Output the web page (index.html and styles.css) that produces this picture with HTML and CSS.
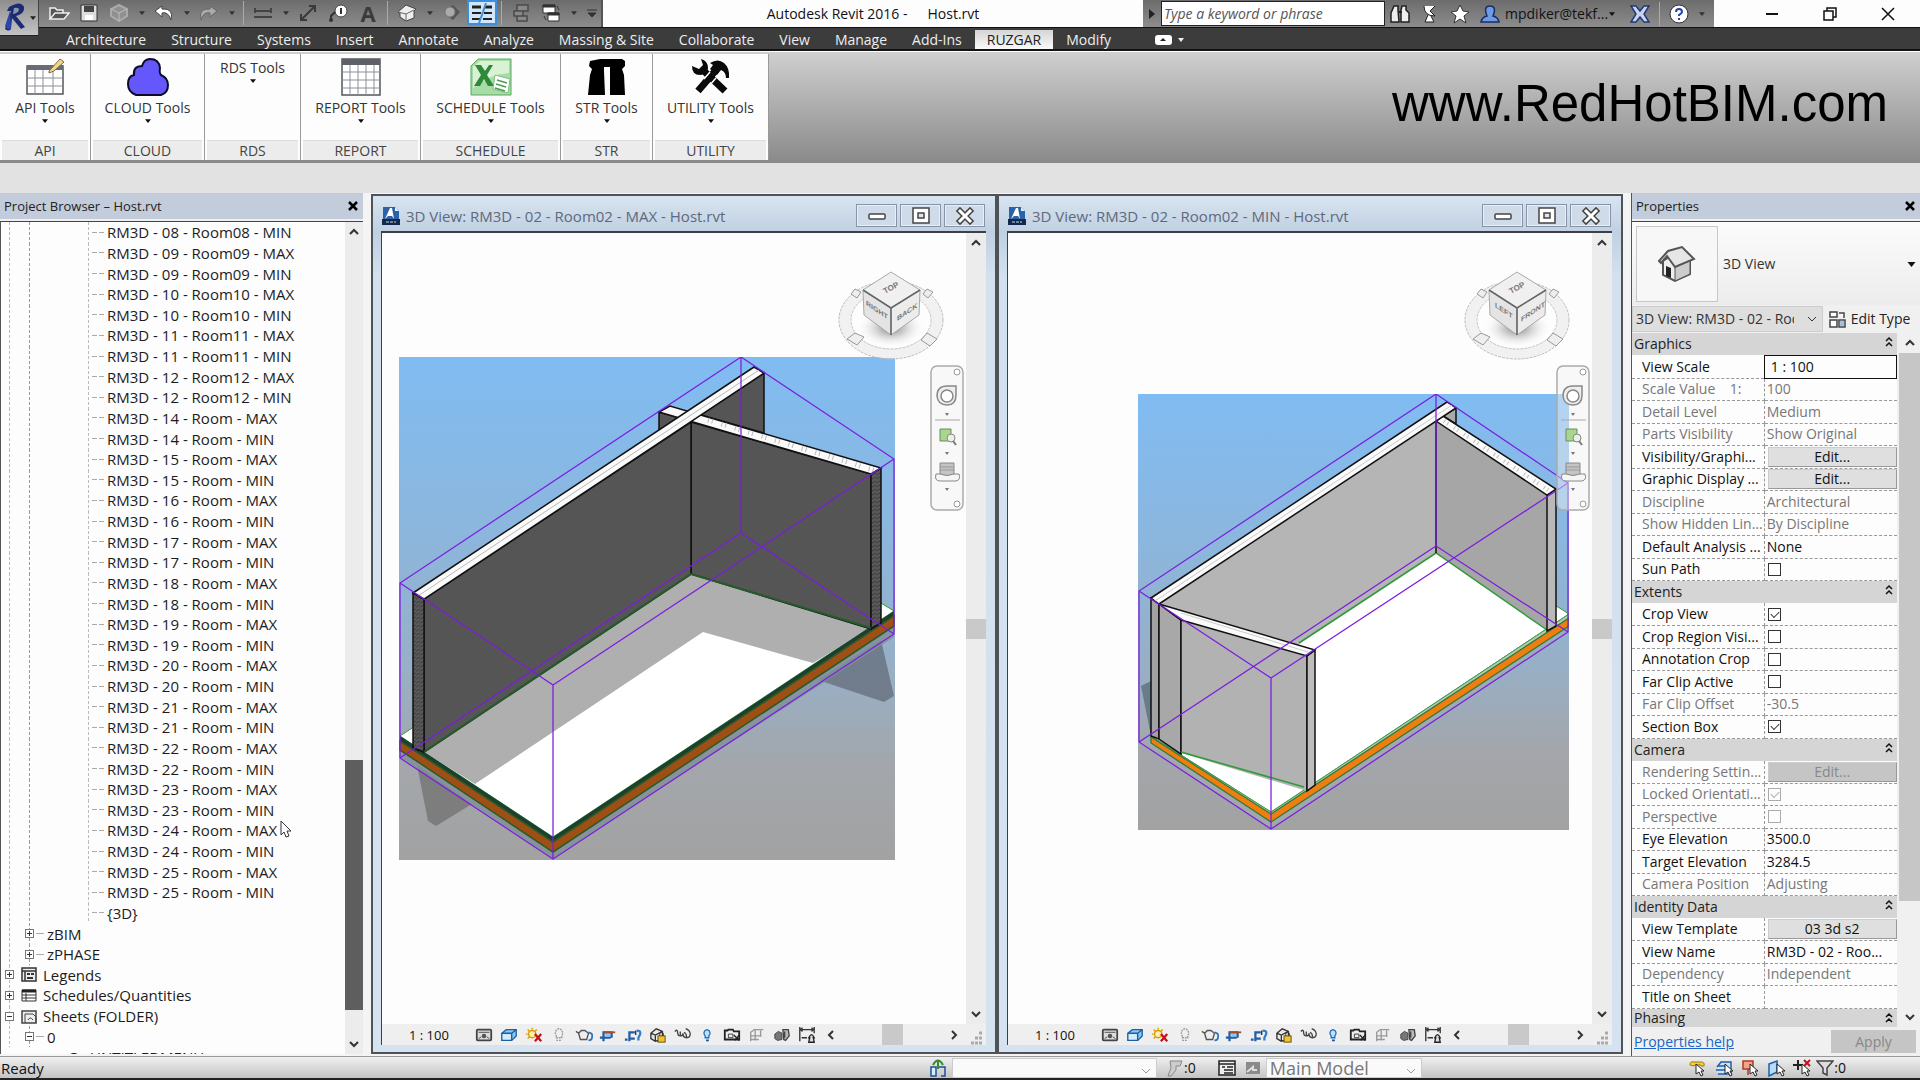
FILE: index.html
```html
<!DOCTYPE html>
<html lang="en">
<head>
<meta charset="utf-8">
<title>Autodesk Revit 2016 - Host.rvt</title>
<link rel="stylesheet" href="styles.css">
</head>
<body>
<svg class="defs" aria-hidden="true">
  <defs>
    <linearGradient id="sky" x1="0" y1="0" x2="0" y2="1">
      <stop offset="0" stop-color="#80bcf2"/><stop offset=".35" stop-color="#8cb6dd"/><stop offset=".62" stop-color="#98afc6"/><stop offset=".82" stop-color="#a3a6ab"/><stop offset="1" stop-color="#a2a2a2"/>
    </linearGradient>
    <pattern id="hatch" width="4" height="4" patternUnits="userSpaceOnUse"><rect width="4" height="4" fill="#595959"/><path d="M0 3L4 1" stroke="#3c3c3c"/></pattern>
    <radialGradient id="shade"><stop offset="0" stop-color="#777"/><stop offset="1" stop-color="#fff" stop-opacity="0"/></radialGradient>
    <symbol id="i-doc" viewBox="0 0 18 20"><path d="M1 1h12l4 4v14H1z" fill="#2b62a8"/><path d="M3 13L8 2l2 0 2 11-2-3H6z" fill="#fff"/><path d="M13 1v4h4z" fill="#e8f0fa"/><path d="M0 13h18v6H0z" fill="#12284d"/><path d="M4 16h10" stroke="#cfd9ea" stroke-dasharray="3 1"/></symbol>
    <symbol id="i-detail" viewBox="0 0 20 16"><rect x="2" y="2" width="16" height="12" rx="1" fill="#ddd" stroke="#444" stroke-width="2"/><path d="M4 5h12" stroke="#444"/><circle cx="10" cy="9" r="2.500" fill="#555"/><path d="M4 12l3-2M16 12l-3-2" stroke="#444"/></symbol>
    <symbol id="i-style" viewBox="0 0 20 16"><path d="M2 6l5-4h11v7l-5 5H2z" fill="#8ec9f2" stroke="#1d5fa6" stroke-width="1.500"/><path d="M2 6h11v8M13 6l5-4" fill="none" stroke="#1d5fa6" stroke-width="1.500"/><path d="M3 7h9v6H3z" fill="#d6ecfb"/></symbol>
    <symbol id="i-sun" viewBox="0 0 20 16"><circle cx="8" cy="7" r="4" fill="#fff3b0" stroke="#d99a00" stroke-width="1.500"/><path d="M8 0v2M1 7h2M3 2l2 2M13 2l-2 2M3 12l2-2" stroke="#d99a00" stroke-width="1.500"/><path d="M11 7l7 8M18 7l-7 8" stroke="#c1121c" stroke-width="2.500"/></symbol>
    <symbol id="i-bulb" viewBox="0 0 20 16"><path d="M10 1a5 5 0 0 0-3 8v2h6V9a5 5 0 0 0-3-8zM7 14h6" fill="none" stroke="#999" stroke-width="1.500" stroke-dasharray="2 1"/></symbol>
    <symbol id="i-teapot" viewBox="0 0 20 16"><path d="M1 4l3 2 2 7h7l2-7-4-3H7L4 6" fill="#eee" stroke="#555" stroke-width="1.500"/><path d="M15 5q5 1 4 5 0 4-4 4" fill="none" stroke="#2a72c4" stroke-width="2"/></symbol>
    <symbol id="i-crop" viewBox="0 0 20 16"><path d="M1 11h12M5 15V5h10M14 5v6" fill="none" stroke="#1f5fa8" stroke-width="2.500"/><path d="M5 5h13" stroke="#a05030" stroke-width="2"/><path d="M7 7h5v3H7z" fill="#8cc0ee"/></symbol>
    <symbol id="i-cropreg" viewBox="0 0 20 16"><path d="M1 13h3M6 15V5h6M12 12H5" fill="none" stroke="#1f5fa8" stroke-width="2.500"/><path d="M13 3v5" stroke="#333" stroke-width="1.500"/><path d="M14 3q5 0 4 4l-2 4v3" fill="none" stroke="#2f7fd0" stroke-width="2.500"/></symbol>
    <symbol id="i-lock3d" viewBox="0 0 20 18"><path d="M2 7l6-5 7 3v9l-8 2-5-3zM2 7l5 2 8-4M7 9v7" fill="#e8e8e8" stroke="#333" stroke-width="1.500"/><rect x="10" y="10" width="8" height="7" fill="#f1c232" stroke="#5b4500"/><path d="M12 10V7q2-2 4 0v3" fill="none" stroke="#333"/></symbol>
    <symbol id="i-glasses" viewBox="0 0 20 16"><path d="M1 4q3-3 3 1 0 4 3 4t3-3q0 5 4 5t4-4-5-6M7 9V4M14 11q0-5-3-6" fill="none" stroke="#444" stroke-width="1.500"/></symbol>
    <symbol id="i-reveal" viewBox="0 0 20 16"><path d="M10 2a4 4 0 0 0-2 7v2h4V9a4 4 0 0 0-2-7z" fill="#bfe1fb" stroke="#1d6fc0" stroke-width="1.500"/><path d="M9 14h3" stroke="#1d4d90" stroke-width="2"/></symbol>
    <symbol id="i-temp" viewBox="0 0 20 16"><path d="M2 3h3l1-1h5l1 2h6v9H2z" fill="#eee" stroke="#222" stroke-width="2"/><path d="M6 7h5v4H6z" fill="none" stroke="#333"/><path d="M12 8l6 6M18 8l-5 6" stroke="#222" stroke-width="1.500"/></symbol>
    <symbol id="i-analytic" viewBox="0 0 20 16"><path d="M3 15V5l4-3h10M3 9h12M3 13h9M8 3v11M14 3v7" fill="none" stroke="#999" stroke-width="1.500"/></symbol>
    <symbol id="i-displace" viewBox="0 0 20 16"><path d="M2 7l4-3 4 2v7l-5 1-3-2z" fill="#777" stroke="#444"/><path d="M11 2l6 0 1 7-4 5-2-1zM13 4v7" fill="#bbb" stroke="#444" stroke-width="1.500"/></symbol>
    <symbol id="i-constraint" viewBox="0 0 20 20"><path d="M2 1v16M18 1v7M3 4h14M5 2L3 4l2 2M15 2l2 2-2 2M4 13h6" fill="none" stroke="#333" stroke-width="1.500"/><path d="M12 18l1-5h-1q3-7 6 0h-1l1 5z" fill="#ddd" stroke="#222" stroke-width="1.500"/></symbol>
    <symbol id="i-cube" viewBox="0 0 110 96">
      <ellipse cx="54" cy="52" rx="46" ry="33" fill="none" stroke="#f1f1f1" stroke-width="11"/>
      <ellipse cx="54" cy="52" rx="52" ry="39" fill="none" stroke="#bbb" stroke-dasharray="3 1"/><ellipse cx="54" cy="52" rx="40" ry="29" fill="#fdfdfd" stroke="#c4c4c4" stroke-dasharray="3 1"/>
      <ellipse cx="54" cy="60" rx="34" ry="20" fill="url(#shade)"/>
      <path d="M14 26l4-5 6 3-4 6zM86 26l4-5 6 3-5 6zM10 71l8-6 9 4-7 8zM84 72l6-7 10 6-7 7z" fill="#eee" stroke="#999"/>
      <path d="M54 4L83 22 54 40 26 22z" fill="#f0f0f0" stroke="#aaa"/><path d="M26 22L54 40V67L27 47z" fill="#e4e4e4" stroke="#aaa"/><path d="M83 22L54 40V67L82 47z" fill="#ececec" stroke="#aaa"/><path d="M26 22L54 40 83 22M54 40V67" fill="none" stroke="#666" stroke-width="1.500"/>
    </symbol>
    <symbol id="i-nav" viewBox="0 0 34 146">
      <rect x="1" y="1" width="32" height="144" rx="6" fill="#f2f2f2" fill-opacity=".45" stroke="#aaa" stroke-width="1.500"/>
      <circle cx="27" cy="7" r="3" fill="#fff" stroke="#999"/><circle cx="27" cy="139" r="3" fill="#fff" stroke="#999"/>
      <path d="M17 21h9v9q0 10-9 10T7 31q0-10 10-10z" fill="#eee" stroke="#888" stroke-width="1.500"/><circle cx="17" cy="31" r="6" fill="#fff" stroke="#888" stroke-width="1.500"/>
      <path d="M5 55h25" stroke="#aaa"/>
      <path d="M10 64h11v12H10z" fill="#a9d68f" stroke="#6b8b60"/><circle cx="21" cy="73" r="4" fill="#e9f1e6" stroke="#888"/><path d="M23 76l3 4" stroke="#777" stroke-width="2"/>
      <path d="M10 98h14v13H10z" fill="#c4c4c4" stroke="#888"/><path d="M10 102h14M10 105h14" stroke="#999"/><path d="M6 109q-2 7 4 7h16q5-1 3-7H24q-7 3-14 0z" fill="#f5f5f5" stroke="#888"/>
      <path d="M15 48h4l-2 3zM15 87h4l-2 3zM15 123h4l-2 3z" fill="#777"/>
    </symbol>
    <symbol id="i-chev" viewBox="0 0 10 10"><path d="M1 7l4-4 4 4" fill="none" stroke="currentColor" stroke-width="2"/></symbol>
    <symbol id="i-thinchev" viewBox="0 0 10 10"><path d="M1 7l4-4 4 4" fill="none" stroke="currentColor"/></symbol>
    <symbol id="i-dbl" viewBox="0 0 10 12"><path d="M2 5l3-3 3 3M2 10l3-3 3 3" fill="none" stroke="#111" stroke-width="1.500"/></symbol>
    <symbol id="i-arr" viewBox="0 0 8 5"><path d="M0 0h8L4 5z" fill="currentColor"/></symbol>
    <symbol id="i-cursor" viewBox="0 0 12 18"><path d="M1 1v14l3-3 2 5 3-1-2-5h4z" fill="#fff" stroke="#333"/></symbol>
    <symbol id="i-select" viewBox="0 0 10 14"><path d="M1 1v10l3-2 2 4 2-1-2-4h3z" fill="#fff" stroke="#222"/></symbol>
  </defs>
</svg>

<div class="app">
  <header class="titlebar">
    <button class="appmenu" aria-label="Application menu">
      <svg width="26" height="32" viewBox="0 0 26 32"><path d="M7 5q12-7 15 0 1 7-8 9l9 11-4 2-9-11-1 11q-2 3-6 0L9 9 5 9z" fill="#1c2c74"/><path d="M12 6q5-1 5 2-1 3-6 4z" fill="#8d93a8"/><path d="M3 24L8 9l1 17q-2 4-6-2z" fill="#2c45a8"/></svg>
      <svg width="6" height="4"><use href="#i-arr"/></svg>
    </button>
    <nav class="qat" aria-label="Quick access">
      <button aria-label="Open"><svg width="22" height="16"><path d="M2 14V3h5l2 2h6v3M2 14L7 8h14l-5 6z" fill="#555" stroke="#eee" stroke-width="1.500"/></svg></button>
      <button aria-label="Save"><svg width="18" height="18"><path d="M1 1h16v16H1z" fill="#ddd" stroke="#333"/><path d="M4 2h10v6H4z" fill="#444"/><path d="M5 11h8v5H5z" fill="#fff"/></svg></button>
      <button aria-label="Synchronize"><svg width="20" height="18"><path d="M10 1l8 4v7l-8 5-8-5V5z" fill="#909090" stroke="#aaa" stroke-width="2"/><path d="M2 5l8 4 8-4M10 9v8" stroke="#bbb" fill="none"/></svg></button>
      <button class="drop" aria-label="More"><svg width="6" height="4"><use href="#i-arr"/></svg></button>
      <button aria-label="Undo"><svg width="22" height="18"><path d="M9 2L2 7l7 6V9q6-2 9 7 3-12-9-11z" fill="#fff" stroke="#444"/></svg></button>
      <button class="drop" aria-label="Undo list"><svg width="6" height="4"><use href="#i-arr"/></svg></button>
      <button aria-label="Redo"><svg width="22" height="18"><path d="M12 2l7 5-7 6V9Q6 7 3 16 0 4 12 5z" fill="#aaa" stroke="#666"/></svg></button>
      <button class="drop" aria-label="Redo list"><svg width="6" height="4"><use href="#i-arr"/></svg></button>
      <i class="sep"></i>
      <button aria-label="Measure"><svg width="18" height="16"><path d="M1 3v5M17 3v5M1 6h16M0 12h18" stroke="#444" stroke-width="2"/></svg></button>
      <button class="drop" aria-label="Measure list"><svg width="6" height="4"><use href="#i-arr"/></svg></button>
      <button aria-label="Aligned dimension"><svg width="20" height="20"><path d="M4 16L16 4M11 3l6 0v6M9 17l-6 0v-6" stroke="#3a3a3a" stroke-width="2" fill="none"/></svg></button>
      <button aria-label="Tag"><svg width="22" height="20"><circle cx="14" cy="8" r="6" fill="#fff" stroke="#444"/><path d="M14 5v6M8 9L4 13v5" stroke="#333" stroke-width="2" fill="none"/><circle cx="4" cy="17" r="2" fill="#333"/></svg></button>
      <button class="text-tool" aria-label="Text">A</button>
      <i class="sep"></i>
      <button aria-label="3D view"><svg width="20" height="18"><path d="M1 8l8-7 10 4-2 2v7l-8 3-6-4V9z" fill="#eee" stroke="#444"/><path d="M1 8l8 2 8-4M9 10v7" stroke="#666" fill="none"/></svg></button>
      <button class="drop" aria-label="3D view list"><svg width="6" height="4"><use href="#i-arr"/></svg></button>
      <button aria-label="Section"><svg width="18" height="16"><path d="M7 2l3-2 7 7-7 8-3-2z" fill="#555"/><circle cx="7" cy="7" r="5" fill="#aaa" stroke="#777"/></svg></button>
      <button class="on" aria-label="Thin lines"><svg width="24" height="20"><path d="M2 4h9M15 4h7" stroke="#222" stroke-width="3"/><path d="M2 10h9M14 10h8M2 16h8M13 16h9" stroke="#222" stroke-width="2"/><path d="M16 0l-3 9-4 11" stroke="#4a8ed0" stroke-width="2" fill="none"/></svg></button>
      <i class="sep"></i>
      <button aria-label="Close hidden windows"><svg width="18" height="20"><path d="M5 2h11v6H5zM2 8h9v5H2zM5 13h10v5H5z" fill="#888" stroke="#4a4a4a" stroke-width="1.500"/></svg></button>
      <button aria-label="Switch windows"><svg width="20" height="20"><path d="M2 2h12v8H2z" fill="#fff" stroke="#333"/><path d="M7 10h11v8H7z" fill="#fff" stroke="#333"/><path d="M2 2h12v2H2zM7 10h11v2H7zM16 3l2 4M3 13l2 4" fill="#333" stroke="#333"/></svg></button>
      <button class="drop" aria-label="Window list"><svg width="6" height="4"><use href="#i-arr"/></svg></button>
      <button class="drop custom" aria-label="Customize"><svg width="12" height="10"><path d="M1 2h10M2 5h8L6 9z" fill="#333" stroke="#333"/></svg></button>
    </nav>
    <h1 class="apptitle"><span>Autodesk Revit 2016 -</span><span>Host.rvt</span></h1>
    <div class="infocenter">
      <button class="toggle" aria-label="Collapse search"><svg width="6" height="10"><path d="M0 0l6 5-6 5z" fill="#222"/></svg></button>
      <input type="search" aria-label="Search help" placeholder="Type a keyword or phrase">
      <button aria-label="Search"><svg width="20" height="20"><path d="M4 2h4v4l1 12H1V9zM12 2h4v4l3 3v9h-8V6z" fill="#eee" stroke="#222" stroke-width="1.500"/><path d="M8 8h4" stroke="#222" stroke-width="2"/></svg></button>
      <button aria-label="Communication center"><svg width="18" height="20"><path d="M3 2q0 10 11 10L9 7l5-5M7 11l-3 7h9l-3-6" fill="#fff" stroke="#222"/></svg></button>
      <button aria-label="Favorites"><svg width="20" height="20"><path d="M10 1l3 6 6 1-5 4 2 7-6-4-6 4 2-7-5-4 6-1z" fill="#fff" stroke="#333"/></svg></button>
      <button aria-label="Account"><svg width="20" height="20"><path d="M1 18q1-5 6-6Q3 2 10 2t3 10q5 1 6 6z" fill="#6d9be6" stroke="#1c2d66" stroke-width="1.500"/></svg></button>
      <button class="user">mpdiker@tekf...<svg width="6" height="4"><use href="#i-arr"/></svg></button>
      <button aria-label="Exchange apps"><svg width="20" height="18"><path d="M1 1h5l4 5 4-5h5l-5 8 5 8h-5l-4-5-4 5H1l5-8z" fill="#c9d5ee" stroke="#1f3a7a" stroke-width="1.500"/></svg></button>
      <i class="sep"></i>
      <button aria-label="Help"><svg width="20" height="20"><circle cx="10" cy="10" r="9" fill="#fff" stroke="#333"/><path d="M7 8q0-3 3-3t3 3q0 1-3 3v1M10 14v2" fill="none" stroke="#2444a8" stroke-width="2"/></svg></button>
      <button class="drop" aria-label="Help list"><svg width="6" height="4"><use href="#i-arr"/></svg></button>
    </div>
    <div class="winctl">
      <button aria-label="Minimize"><svg width="14" height="14"><path d="M1 7h12" stroke="#111" stroke-width="2"/></svg></button>
      <button aria-label="Restore"><svg width="14" height="14"><path d="M1 4h9v9H1zM4 4V1h9v9h-3" fill="none" stroke="#111" stroke-width="1.500"/></svg></button>
      <button aria-label="Close"><svg width="14" height="14"><path d="M1 1l12 12M13 1L1 13" stroke="#111" stroke-width="1.500"/></svg></button>
    </div>
  </header>

  <nav class="tabs">
    <button>Architecture</button><button>Structure</button><button>Systems</button><button>Insert</button><button>Annotate</button><button>Analyze</button><button>Massing &amp; Site</button><button>Collaborate</button><button>View</button><button>Manage</button><button>Add-Ins</button><button class="active">RUZGAR</button><button>Modify</button>
    <button class="tabstate" aria-label="Minimize ribbon"><svg width="34" height="12"><rect x="1" y="1" width="17" height="10" rx="3" fill="#fff"/><path d="M6 7h6L9 4z" fill="#222"/><path d="M24 4h6l-3 4z" fill="#eee"/></svg></button>
  </nav>

  <section class="ribbon">
    <div class="group g-api"><button><svg width="40" height="38"><path d="M2 8h36v28H2z" fill="#fff" stroke="#555" stroke-width="1.500"/><path d="M2 7h36v5H2z" fill="#666b75"/><path d="M2 20h36M2 28h36M10 12v24M18 12v24M28 12v24" stroke="#8a8f99" fill="none"/><path d="M24 13L35 1l4 3-10 9-5 2z" fill="#f0d58a" stroke="#7d6a3a"/></svg>API Tools<svg class="arr"><use href="#i-arr"/></svg></button><h2>API</h2></div>
    <div class="group g-cloud"><button><svg width="42" height="38"><path d="M9 37Q1 34 1 26q0-8 6-9-1-9 8-9 2-7 8-7 9 0 10 9-1 5 1 7 7 3 7 10 0 8-7 10z" fill="#6457fb" stroke="#0c0c2a" stroke-width="2"/></svg>CLOUD Tools<svg class="arr"><use href="#i-arr"/></svg></button><h2>CLOUD</h2></div>
    <div class="group g-rds"><button>RDS Tools<svg class="arr"><use href="#i-arr"/></svg></button><h2>RDS</h2></div>
    <div class="group g-report"><button><svg width="40" height="38"><path d="M1 1h38v36H1z" fill="#fff" stroke="#555" stroke-width="1.500"/><path d="M1 1h38v6H1z" fill="#5d6069"/><path d="M1 14h38M1 22h38M1 30h38M9 7v30M17 7v30M25 7v30M33 7v30" stroke="#8a8f99"/></svg>REPORT Tools<svg class="arr"><use href="#i-arr"/></svg></button><h2>REPORT</h2></div>
    <div class="group g-schedule"><button><svg width="42" height="38"><path d="M8 1h33v36H1V8z" fill="#a8dca6" stroke="#58a860"/><path d="M10 3h29v12Q20 16 3 30V9z" fill="#d9f2d4"/><path d="M5 7h6l4 6 4-6h4l-6 10 7 11h-6l-4-7-4 7H4l7-11z" fill="#2c8a3a"/><path d="M25 17l15 4-2 14-15-4z" fill="#fff" stroke="#7fbf80"/><path d="M27 22l10 3M26 26l10 3M25 30l10 3" stroke="#4f9a55" stroke-width="1.500"/></svg>SCHEDULE Tools<svg class="arr"><use href="#i-arr"/></svg></button><h2>SCHEDULE</h2></div>
    <div class="group g-str"><button><svg width="40" height="38"><path d="M3 3l10-2 22 0 3 2v5l-3 3 2 6 1 20H23V9h-6v4l1 24H1l2-20 2-6-3-3z" fill="#000"/></svg>STR Tools<svg class="arr"><use href="#i-arr"/></svg></button><h2>STR</h2></div>
    <div class="group g-utility"><button><svg width="42" height="38"><path d="M8 33L26 12M15 14L35 33" stroke="#0a0a0a" stroke-width="7"/><path d="M20 5q8-5 14 0 6 5 5 15l-3 0q0-6-5-8l-4 5-7-6 3-4z" fill="#0a0a0a"/><path d="M2 8q0 9 8 9 8 0 8-7 0-7-7-9l2 6-4 4z" fill="#0a0a0a"/><path d="M19 28l7-8M14 21l6-7" stroke="#fff" stroke-width="1.500"/></svg>UTILITY Tools<svg class="arr"><use href="#i-arr"/></svg></button><h2>UTILITY</h2></div>
    <p class="brand">www.RedHotBIM.com</p>
  </section>

  <main class="workspace">
    <aside class="panel browser">
      <header><h2>Project Browser – Host.rvt</h2><button aria-label="Close"><svg width="12" height="12"><path d="M2 2l8 8M10 2l-8 8" stroke="#000" stroke-width="2.500"/></svg></button></header>
      <div class="panel-body">
        <ul class="tree">
          <li class="leaf">RM3D - 08 - Room08 - MIN</li>
          <li class="leaf">RM3D - 09 - Room09 - MAX</li>
          <li class="leaf">RM3D - 09 - Room09 - MIN</li>
          <li class="leaf">RM3D - 10 - Room10 - MAX</li>
          <li class="leaf">RM3D - 10 - Room10 - MIN</li>
          <li class="leaf">RM3D - 11 - Room11 - MAX</li>
          <li class="leaf">RM3D - 11 - Room11 - MIN</li>
          <li class="leaf">RM3D - 12 - Room12 - MAX</li>
          <li class="leaf">RM3D - 12 - Room12 - MIN</li>
          <li class="leaf">RM3D - 14 - Room - MAX</li>
          <li class="leaf">RM3D - 14 - Room - MIN</li>
          <li class="leaf">RM3D - 15 - Room - MAX</li>
          <li class="leaf">RM3D - 15 - Room - MIN</li>
          <li class="leaf">RM3D - 16 - Room - MAX</li>
          <li class="leaf">RM3D - 16 - Room - MIN</li>
          <li class="leaf">RM3D - 17 - Room - MAX</li>
          <li class="leaf">RM3D - 17 - Room - MIN</li>
          <li class="leaf">RM3D - 18 - Room - MAX</li>
          <li class="leaf">RM3D - 18 - Room - MIN</li>
          <li class="leaf">RM3D - 19 - Room - MAX</li>
          <li class="leaf">RM3D - 19 - Room - MIN</li>
          <li class="leaf">RM3D - 20 - Room - MAX</li>
          <li class="leaf">RM3D - 20 - Room - MIN</li>
          <li class="leaf">RM3D - 21 - Room - MAX</li>
          <li class="leaf">RM3D - 21 - Room - MIN</li>
          <li class="leaf">RM3D - 22 - Room - MAX</li>
          <li class="leaf">RM3D - 22 - Room - MIN</li>
          <li class="leaf">RM3D - 23 - Room - MAX</li>
          <li class="leaf">RM3D - 23 - Room - MIN</li>
          <li class="leaf">RM3D - 24 - Room - MAX<svg class="cursor" width="12" height="18"><use href="#i-cursor"/></svg></li>
          <li class="leaf">RM3D - 24 - Room - MIN</li>
          <li class="leaf">RM3D - 25 - Room - MAX</li>
          <li class="leaf">RM3D - 25 - Room - MIN</li>
          <li class="leaf">{3D}</li>
          <li class="sub"><button class="exp plus" aria-label="Expand zBIM"></button>zBIM</li>
          <li class="sub"><button class="exp plus" aria-label="Expand zPHASE"></button>zPHASE</li>
          <li class="top"><button class="exp plus" aria-label="Expand Legends"></button><svg width="16" height="15"><path d="M1 1h14v13H1zM1 4h14M4 4v10" fill="#eee" stroke="#333" stroke-width="1.500"/><path d="M6 7h3M10 7h3M6 11h6" stroke="#333" stroke-width="2"/></svg>Legends</li>
          <li class="top"><button class="exp plus" aria-label="Expand Schedules/Quantities"></button><svg width="16" height="13"><path d="M1 1h14v11H1zM1 6h14M1 9h14M5 4v8" fill="#fff" stroke="#333"/><path d="M1 2h14" stroke="#222" stroke-width="3"/></svg>Schedules/Quantities</li>
          <li class="top"><button class="exp" aria-label="Collapse Sheets"></button><svg width="16" height="15"><path d="M1 2h14v12H1z" fill="#eee" stroke="#444" stroke-width="1.500"/><path d="M4 5h8l3 3v6M4 5v9M7 11q2-4 5 0" fill="none" stroke="#444"/></svg>Sheets (FOLDER)</li>
          <li class="sub"><button class="exp" aria-label="Collapse 0"></button>0</li>
          <li class="cut">C - UNTITLEDMENU</li>
        </ul>
        <div class="vscroll dark"><button aria-label="Scroll up"><svg width="10" height="10"><use href="#i-chev"/></svg></button><i class="thumb"></i><button class="down" aria-label="Scroll down"><svg width="10" height="10"><use href="#i-chev"/></svg></button></div>
      </div>
    </aside>

    <div class="mdi">
      <section class="view">
        <header><svg width="18" height="20"><use href="#i-doc"/></svg><h2>3D View: RM3D - 02 - Room02 - MAX - Host.rvt</h2>
          <button aria-label="Minimize"><svg width="20" height="18"><rect x="2" y="7" width="16" height="5" rx="1" fill="#fff" stroke="#444" stroke-width="1.500"/></svg></button>
          <button aria-label="Maximize"><svg width="20" height="18"><path d="M2 1h16v15H2z" fill="#fff" stroke="#444" stroke-width="1.500"/><path d="M7 6h6v5H7z" fill="#dde6f0" stroke="#444" stroke-width="1.500"/></svg></button>
          <button aria-label="Close"><svg width="20" height="18"><path d="M5 4l10 10M15 4L5 14" stroke="#444" stroke-width="6" stroke-linecap="square"/><path d="M5 4l10 10M15 4L5 14" stroke="#fff" stroke-width="3" stroke-linecap="square"/></svg></button>
        </header>
        <div class="client">
          <div class="canvas">
            <svg class="scene max" viewBox="399 357 496 503" role="img" aria-label="Section box of Room02, maximum height">
              <rect x="399" y="357" width="496" height="503" fill="url(#sky)"/>
              <path d="M417 765L428 821 436 826 472 804z" fill="#777" opacity=".85"/><path d="M818 680L884 702 894 696 881 640z" fill="#66707e" opacity=".8"/>
              <path d="M400 750L553 852 894 626V637L553 858 400 757z" fill="#7f8f96" opacity=".8"/>
              <path d="M400 736L691 545 881 603 894 611 553 837z" fill="#fff" stroke="#2d9a3a"/>
              <path d="M424 752L691 574 871 628 813 663 703 632 475 784z" fill="#afafaf"/>
              <path d="M400 736L553 837 894 611V618L553 844 400 743z" fill="#1d3f2c"/>
              <path d="M400 741L553 842 894 616V626L553 852 400 750z" fill="#a04f14" stroke="#2b5a2d" stroke-width="1.500"/>
              <g stroke="#111" stroke-width="1.500">
                <path d="M659 412L680 418 659 432z" fill="#555"/>
                <path d="M701 415L764 373V433z" fill="#555"/>
                <path d="M691 422L871 474V629L691 574z" fill="#555"/>
                <path d="M424 599L691 422V574L424 752z" fill="#555"/>
                <path d="M871 474L881 468V623L871 629z" fill="url(#hatch)"/>
                <path d="M413 593L424 599V752L413 748z" fill="url(#hatch)"/>
                <path d="M659 412L670 406 881 468 871 474z" fill="#fafafa"/>
                <path d="M413 593L754 367 764 373 424 599z" fill="#fafafa"/>
              </g>
              <path d="M418 596L759 370" stroke="#bbb"/><path d="M708 420L874 470" stroke="#bbb" stroke-width="5" stroke-dasharray="1 3 1 9"/>
              <path d="M424 752L691 574 871 628" fill="none" stroke="#235c2a" stroke-width="2"/>
              <path d="M741 357L894 459V634L553 859 400 758V583zM400 583L553 685 894 459M553 685V859M741 357V533L894 634M741 533L400 758" fill="none" stroke="#7a1ee0" stroke-width="1.250"/>
            </svg>
            <svg class="cube" width="110" height="96"><use href="#i-cube"/><g fill="#777" font-family="Liberation Sans" font-size="8" font-weight="bold"><text transform="translate(48 26) rotate(-28)">TOP</text><text transform="translate(29 37) skewY(34)" font-size="7">RIGHT</text><text transform="translate(60 53) skewY(-34)" font-size="7">BACK</text></g></svg>
            <svg class="navbar" width="34" height="146"><use href="#i-nav"/></svg>
          </div>
          <div class="vscroll"><button aria-label="Scroll up"><svg width="10" height="10"><use href="#i-chev"/></svg></button><i class="thumb"></i><button class="down" aria-label="Scroll down"><svg width="10" height="10"><use href="#i-chev"/></svg></button></div>
          <div class="viewbar"><button class="scale">1 : 100</button>
            <div class="viewtools">
              <button aria-label="Detail level"><svg><use href="#i-detail"/></svg></button><button aria-label="Visual style"><svg><use href="#i-style"/></svg></button><button aria-label="Sun path off"><svg><use href="#i-sun"/></svg></button><button aria-label="Shadows off"><svg><use href="#i-bulb"/></svg></button><button aria-label="Rendering"><svg><use href="#i-teapot"/></svg></button><button aria-label="Crop view"><svg><use href="#i-crop"/></svg></button><button aria-label="Crop region"><svg><use href="#i-cropreg"/></svg></button><button aria-label="Lock 3D view"><svg><use href="#i-lock3d"/></svg></button><button aria-label="Temporary hide"><svg><use href="#i-glasses"/></svg></button><button aria-label="Reveal hidden"><svg><use href="#i-reveal"/></svg></button><button aria-label="Temporary properties"><svg><use href="#i-temp"/></svg></button><button aria-label="Analytical model"><svg><use href="#i-analytic"/></svg></button><button aria-label="Displacement sets"><svg><use href="#i-displace"/></svg></button><button aria-label="Reveal constraints"><svg><use href="#i-constraint"/></svg></button>
            </div>
            <div class="hscroll"><button class="left" aria-label="Scroll left"><svg width="10" height="10"><use href="#i-chev"/></svg></button><i class="thumb"></i><button class="right" aria-label="Scroll right"><svg width="10" height="10"><use href="#i-chev"/></svg></button></div>
          </div>
          <svg class="grip" width="14" height="14"><path d="M9 2h3M5 7h3M9 7h3M1 12h3M5 12h3M9 12h3" stroke="#aaa" stroke-width="3"/></svg>
        </div>
      </section>

      <section class="view">
        <header><svg width="18" height="20"><use href="#i-doc"/></svg><h2>3D View: RM3D - 02 - Room02 - MIN - Host.rvt</h2>
          <button aria-label="Minimize"><svg width="20" height="18"><rect x="2" y="7" width="16" height="5" rx="1" fill="#fff" stroke="#444" stroke-width="1.500"/></svg></button>
          <button aria-label="Maximize"><svg width="20" height="18"><path d="M2 1h16v15H2z" fill="#fff" stroke="#444" stroke-width="1.500"/><path d="M7 6h6v5H7z" fill="#dde6f0" stroke="#444" stroke-width="1.500"/></svg></button>
          <button aria-label="Close"><svg width="20" height="18"><path d="M5 4l10 10M15 4L5 14" stroke="#444" stroke-width="6" stroke-linecap="square"/><path d="M5 4l10 10M15 4L5 14" stroke="#fff" stroke-width="3" stroke-linecap="square"/></svg></button>
        </header>
        <div class="client">
          <div class="canvas">
            <svg class="scene min" viewBox="1138 394 431 436" role="img" aria-label="Section box of Room02, minimum height">
              <rect x="1138" y="394" width="431" height="436" fill="url(#sky)"/>
              <path d="M1141 686L1151 681V736z" fill="#5d7080" opacity=".8"/>
              <path d="M1151 742L1271 822 1569 627V632L1271 829 1139 742z" fill="#9fa9b0" opacity=".7"/>
              <path d="M1151 736L1436 545 1558 607 1569 614 1271 812z" fill="#fff" stroke="#2d9a3a"/>
              <path d="M1151 736L1271 812 1569 614V618L1271 815 1151 738z" fill="#b3c9b6" stroke="#3f9a48"/>
              <path d="M1151 737L1271 814 1569 618V626L1271 822 1151 743z" fill="#ef7d10" stroke="#2f7a38" stroke-width="1.250"/>
              <path d="M1159 604L1436 421V553L1159 737z" fill="#b5b5b5"/>
              <path d="M1436 421L1547 495V630L1436 553z" fill="#a6a6a6"/>
              <path d="M1299 643L1436 553 1547 630" fill="none" stroke="#2f9a3a" stroke-width="1.500"/>
              <g stroke="#111" stroke-width="1.500">
                <path d="M1443 416L1456 408V424z" fill="#aaa"/>
                <path d="M1547 495L1556 489V626L1547 631z" fill="#b9b9b9"/>
                <path d="M1151 598L1159 604V739L1151 736z" fill="#a2a2a2"/>
                <path d="M1159 604L1181 620V754L1159 739z" fill="#a8a8a8"/>
                <path d="M1181 620L1307 656V791L1181 753z" fill="#b2b2b2" stroke="none"/><path d="M1181 620V754M1307 656V791M1436 421V553"/>
                <path d="M1307 656L1315 650V785L1307 791z" fill="#bdbdbd"/>
                <path d="M1443 416L1556 489 1547 495 1436 421z" fill="#fafafa"/>
                <path d="M1151 598L1447 402 1456 408 1159 604z" fill="#fafafa"/>
                <path d="M1159 604L1315 650 1307 656 1181 620z" fill="#fafafa"/>
              </g>
              <path d="M1155 601L1452 405M1181 613L1308 652" stroke="#ccc"/><path d="M1444 421L1548 490" stroke="#bbb" stroke-width="4" stroke-dasharray="1 3 1 7"/>
              <path d="M1181 752L1304 787" stroke="#2f9a3a" stroke-width="1.500"/>
              <path d="M1436 394L1568 483V632L1271 829 1139 742V591zM1139 591L1271 678 1568 483M1271 678V829M1436 394V546L1568 632M1436 546L1139 742" fill="none" stroke="#7a1ee0" stroke-width="1.250"/>
            </svg>
            <svg class="cube" width="110" height="96"><use href="#i-cube"/><g fill="#777" font-family="Liberation Sans" font-size="8" font-weight="bold"><text transform="translate(48 26) rotate(-28)">TOP</text><text transform="translate(32 39) skewY(34)" font-size="7">LEFT</text><text transform="translate(58 54) skewY(-34)" font-size="7">FRONT</text></g></svg>
            <svg class="navbar" width="34" height="146"><use href="#i-nav"/></svg>
          </div>
          <div class="vscroll"><button aria-label="Scroll up"><svg width="10" height="10"><use href="#i-chev"/></svg></button><i class="thumb"></i><button class="down" aria-label="Scroll down"><svg width="10" height="10"><use href="#i-chev"/></svg></button></div>
          <div class="viewbar"><button class="scale">1 : 100</button>
            <div class="viewtools">
              <button aria-label="Detail level"><svg><use href="#i-detail"/></svg></button><button aria-label="Visual style"><svg><use href="#i-style"/></svg></button><button aria-label="Sun path off"><svg><use href="#i-sun"/></svg></button><button aria-label="Shadows off"><svg><use href="#i-bulb"/></svg></button><button aria-label="Rendering"><svg><use href="#i-teapot"/></svg></button><button aria-label="Crop view"><svg><use href="#i-crop"/></svg></button><button aria-label="Crop region"><svg><use href="#i-cropreg"/></svg></button><button aria-label="Lock 3D view"><svg><use href="#i-lock3d"/></svg></button><button aria-label="Temporary hide"><svg><use href="#i-glasses"/></svg></button><button aria-label="Reveal hidden"><svg><use href="#i-reveal"/></svg></button><button aria-label="Temporary properties"><svg><use href="#i-temp"/></svg></button><button aria-label="Analytical model"><svg><use href="#i-analytic"/></svg></button><button aria-label="Displacement sets"><svg><use href="#i-displace"/></svg></button><button aria-label="Reveal constraints"><svg><use href="#i-constraint"/></svg></button>
            </div>
            <div class="hscroll"><button class="left" aria-label="Scroll left"><svg width="10" height="10"><use href="#i-chev"/></svg></button><i class="thumb"></i><button class="right" aria-label="Scroll right"><svg width="10" height="10"><use href="#i-chev"/></svg></button></div>
          </div>
          <svg class="grip" width="14" height="14"><path d="M9 2h3M5 7h3M9 7h3M1 12h3M5 12h3M9 12h3" stroke="#aaa" stroke-width="3"/></svg>
        </div>
      </section>
    </div>

    <aside class="panel props">
      <header><h2>Properties</h2><button aria-label="Close"><svg width="12" height="12"><path d="M2 2l8 8M10 2l-8 8" stroke="#000" stroke-width="2.500"/></svg></button></header>
      <button class="type"><span class="thumbbox"><svg width="38" height="38" viewBox="0 0 38 38"><path d="M5 16v14l12 6 15-7V14L20 6z" fill="#eee" stroke="#555" stroke-width="2"/><path d="M17 21v15l15-7V15z" fill="#ccc" stroke="#555"/><path d="M1 16L10 6 24 2 36 14 17 22 9 11 3 18z" fill="#e6e6e6" stroke="#555" stroke-width="2"/><path d="M8 21l5 2v10l-5-2z" fill="#222"/></svg></span><span>3D View</span><svg width="9" height="5"><use href="#i-arr"/></svg></button>
      <div class="instance">
        <label class="combo"><select aria-label="Element filter"><option>3D View: RM3D - 02 - Room02 - MIN</option></select><svg width="10" height="10"><use href="#i-thinchev"/></svg></label>
        <button class="edittype"><svg width="17" height="17"><path d="M1 1h7v5H1zM1 9h7v7H1zM10 9h6v7h-6zM10 2h5v5" fill="#fff" stroke="#444" stroke-width="1.500"/><path d="M11 10h4v5h-4z" fill="#9ec3ea"/></svg>Edit Type</button>
      </div>
      <div class="panel-body">
        <div class="sheet">
        <table>
          <tr class="sec"><th colspan="2">Graphics<svg><use href="#i-dbl"/></svg></th></tr>
          <tr><td><label for="p1">View Scale</label></td><td class="focus"><input id="p1" type="text" value="1 : 100"></td></tr>
          <tr class="ro"><td>Scale Value &nbsp; &nbsp;1:</td><td>100</td></tr>
          <tr class="ro"><td>Detail Level</td><td>Medium</td></tr>
          <tr class="ro"><td>Parts Visibility</td><td>Show Original</td></tr>
          <tr><td>Visibility/Graphi...</td><td class="b"><button>Edit...</button></td></tr>
          <tr><td>Graphic Display ...</td><td class="b"><button>Edit...</button></td></tr>
          <tr class="ro"><td>Discipline</td><td>Architectural</td></tr>
          <tr class="ro"><td>Show Hidden Lin...</td><td>By Discipline</td></tr>
          <tr><td>Default Analysis ...</td><td>None</td></tr>
          <tr><td><label for="p2">Sun Path</label></td><td><input id="p2" type="checkbox"></td></tr>
          <tr class="sec"><th colspan="2">Extents<svg><use href="#i-dbl"/></svg></th></tr>
          <tr><td><label for="p3">Crop View</label></td><td><input id="p3" type="checkbox" checked></td></tr>
          <tr><td><label for="p4">Crop Region Visi...</label></td><td><input id="p4" type="checkbox"></td></tr>
          <tr><td><label for="p5">Annotation Crop</label></td><td><input id="p5" type="checkbox"></td></tr>
          <tr><td><label for="p6">Far Clip Active</label></td><td><input id="p6" type="checkbox"></td></tr>
          <tr class="ro"><td>Far Clip Offset</td><td>-30.5</td></tr>
          <tr><td><label for="p7">Section Box</label></td><td><input id="p7" type="checkbox" checked></td></tr>
          <tr class="sec"><th colspan="2">Camera<svg><use href="#i-dbl"/></svg></th></tr>
          <tr class="ro"><td>Rendering Settin...</td><td class="b"><button disabled>Edit...</button></td></tr>
          <tr class="ro"><td><label for="p8">Locked Orientati...</label></td><td><input id="p8" type="checkbox" checked disabled></td></tr>
          <tr class="ro"><td><label for="p9">Perspective</label></td><td><input id="p9" type="checkbox" disabled></td></tr>
          <tr><td>Eye Elevation</td><td>3500.0</td></tr>
          <tr><td>Target Elevation</td><td>3284.5</td></tr>
          <tr class="ro"><td>Camera Position</td><td>Adjusting</td></tr>
          <tr class="sec"><th colspan="2">Identity Data<svg><use href="#i-dbl"/></svg></th></tr>
          <tr><td>View Template</td><td class="b"><button>03 3d s2</button></td></tr>
          <tr><td>View Name</td><td>RM3D - 02 - Roo...</td></tr>
          <tr class="ro"><td>Dependency</td><td>Independent</td></tr>
          <tr><td>Title on Sheet</td><td></td></tr>
          <tr class="sec last"><th colspan="2">Phasing<svg><use href="#i-dbl"/></svg></th></tr>
        </table>
        </div>
        <div class="vscroll long"><button aria-label="Scroll up"><svg width="10" height="10"><use href="#i-chev"/></svg></button><i class="thumb"></i><button class="down" aria-label="Scroll down"><svg width="10" height="10"><use href="#i-chev"/></svg></button></div>
      </div>
      <footer><a href="#help">Properties help</a><button disabled>Apply</button></footer>
    </aside>
  </main>

  <footer class="status">
    <span class="ready">Ready</span>
    <div class="sets">
      <button aria-label="Worksets"><svg width="20" height="20"><path d="M3 9h5v9H3z" fill="#d8ecfb" stroke="#1c4f96" stroke-width="1.500"/><path d="M11 9h6v9h-4" fill="none" stroke="#1c4f96" stroke-width="1.500"/><path d="M5 7q5-9 10 0M10 3v8" fill="none" stroke="#3a8a34" stroke-width="2"/></svg></button>
      <label class="combo wide"><select aria-label="Active workset" disabled><option></option></select><svg width="10" height="10"><use href="#i-thinchev"/></svg></label>
      <button class="requests" aria-label="Editing requests"><svg width="18" height="18"><path d="M4 2h12l-2 5h-4v4l-5 6H2l3-8z" fill="#ccc" stroke="#888"/></svg>:0</button>
      <button aria-label="Design options"><svg width="18" height="18"><path d="M1 2h16v14H1zM1 5h16" fill="#eee" stroke="#222" stroke-width="1.500"/><path d="M4 8h3M9 8h6M6 11h9M6 14h9" stroke="#222" stroke-width="1.500"/></svg></button>
      <button aria-label="Add to set"><svg width="18" height="16"><path d="M2 2h14v12H2z" fill="#8a8a8a"/><path d="M3 12l6-5v3h4" fill="none" stroke="#ddd" stroke-width="2"/></svg></button>
      <label class="combo model"><select aria-label="Active design option" disabled><option>Main Model</option></select><svg width="10" height="10"><use href="#i-thinchev"/></svg></label>
    </div>
    <div class="selectors">
      <button aria-label="Select links"><svg width="20" height="18"><path d="M2 6q0-4 4-3h7q4 0 3 4h-3q0-2-3-1-3-1-4 1z" fill="#f4d03f" stroke="#a07800"/><use href="#i-select" x="7" y="4" width="10" height="14"/></svg></button>
      <button aria-label="Select underlay"><svg width="20" height="18"><path d="M3 8l4-5h10v12H4M2 11h10M4 7h9" fill="#cfe3f7" stroke="#1f5fa8" stroke-width="1.500"/><use href="#i-select" x="10" y="4" width="10" height="14"/></svg></button>
      <button aria-label="Select pinned"><svg width="20" height="18"><path d="M3 2h10v8H3zM8 10v6" fill="#f2a48a" stroke="#b03a20" stroke-width="1.500"/><use href="#i-select" x="9" y="4" width="10" height="14"/></svg></button>
      <button aria-label="Select by face"><svg width="20" height="18"><path d="M3 5l8-3v11l-8 4z" fill="#b9dcf6" stroke="#1f5fa8" stroke-width="1.500"/><use href="#i-select" x="10" y="4" width="10" height="14"/></svg></button>
      <button aria-label="Drag on selection"><svg width="20" height="18"><path d="M1 6h10M6 1v10" stroke="#222" stroke-width="2"/><path d="M12 1l6 6M18 1l-6 6" stroke="#c1121c" stroke-width="2"/><use href="#i-select" x="9" y="4" width="10" height="14"/></svg></button>
      <button aria-label="Filter"><svg width="18" height="18"><path d="M1 2h16l-6 7v7l-4-2V9z" fill="#ddd" stroke="#444" stroke-width="1.500"/></svg>:0</button>
    </div>
  </footer>
</div>
</body>
</html>
```
FILE: styles.css
```css
* { box-sizing: border-box; }
body { margin: 0; font: 14px/20px "Open Sans", "Noto Sans", sans-serif; color: #222; background: #f0f0f0; }
h1, h2, p, ul { margin: 0; padding: 0; font: inherit; list-style: none; }
button, input, select { font: inherit; color: inherit; border: 0; padding: 0; margin: 0; background: none; border-radius: 0; }
button { display: flex; align-items: center; justify-content: center; white-space: nowrap; }
svg { display: block; flex: none; }
.defs { position: absolute; width: 0; height: 0; }
.app { height: 100vh; min-height: 900px; display: flex; flex-direction: column; overflow: hidden; border-bottom: 2px solid #222; }

/* title bar */
.titlebar { display: flex; height: 27px; background: #fdfdfd; flex: none; position: relative; z-index: 2; }
.appmenu { width: 39px; height: 36px; flex: none; gap: 2px; background: linear-gradient(#8e8e8e, #c4c4c4); border-right: 1px solid #444; border-bottom: 1px solid #222; }
.qat, .infocenter { display: flex; align-items: center; background: linear-gradient(#6c6c6c, #8d8d8d); flex: none; color: #333; }
.qat { padding: 0 5px 2px; width: 564px; border-right: 2px solid #555; }
.qat button { width: 30px; height: 25px; flex: none; }
.qat .drop { width: 15px; }
.qat .custom { margin-left: 3px; }
.qat .on { background: #cfe6fb; border: 2px solid #3b8ede; }
.qat .text-tool { font-size: 22px; font-weight: 700; color: #3a3a3a; }
.sep { width: 1px; height: 24px; margin: 0 4px; background: #aaa; flex: none; }
.apptitle { flex: 1; display: flex; align-items: center; justify-content: center; gap: 20px; color: #111; white-space: pre; }
.infocenter { width: 571px; padding-right: 5px; }
.infocenter button { width: 30px; height: 26px; flex: none; }
.infocenter .toggle { width: 18px; }
.infocenter .drop { width: 15px; }
.infocenter input { width: 224px; height: 25px; background: #fff; border: 1px solid #222; padding: 0 2px; font-style: italic; }
.infocenter input::placeholder { color: #555; opacity: 1; }
.infocenter .user { width: 120px; gap: 1px; color: #111; justify-content: flex-start; }
.winctl { display: flex; width: 206px; padding: 0 3px 0 29px; }
.winctl button { width: 58px; }

/* ribbon tabs */
.tabs { display: flex; gap: 1px; height: 24px; background: #3c3c3c; border-top: 1px solid #111; border-bottom: 2px solid #111; padding: 2px 0 0 54px; flex: none; color: #eee; }
.tabs button { padding: 0 12px; }
.tabs .active { background: linear-gradient(#d4d4d4, #fafafa); color: #222; }
.tabs .tabstate { padding: 0 0 0 30px; }

/* ribbon */
.ribbon { display: flex; height: 112px; padding: 2px 0 1px; flex: none; border-top: 1px solid #fff; border-bottom: 2px solid #8a8a8a; background: linear-gradient(#cfcfcf, #8b8b8b); }
.group { flex: none; display: flex; flex-direction: column; background: #fdfdfd; border-right: 1px solid #999; color: #333; }
.group > button { flex: 1; flex-direction: column; justify-content: flex-start; padding-top: 4px; }
.group > button svg:first-child:not(.arr) { margin-bottom: 2px; }
.group .arr { width: 6px; height: 4px; margin-top: 1px; color: #111; }
.group h2 { height: 20px; text-align: center; background: #ececec; border-top: 1px solid #ddd; color: #444; margin: 0 2px; }
.g-api { width: 91px; } .g-cloud { width: 114px; } .g-rds { width: 96px; } .g-report { width: 120px; }
.g-schedule { width: 140px; } .g-str { width: 92px; } .g-utility { width: 116px; }
.brand { margin-left: auto; padding-right: 32px; font: 51px/100px "Liberation Sans", Arial, sans-serif; color: #000; }

/* workspace */
.workspace { flex: 1; min-height: 0; display: flex; gap: 8px; padding-top: 30px; background: linear-gradient(#e2e2e2 30px, #f4f4f4 30px); }
.panel { flex: none; display: flex; flex-direction: column; background: #f0f0f0; }
.panel > header { height: 26px; display: flex; align-items: center; padding: 0 4px; background: #c2ccda; justify-content: space-between; font-size: 13px; margin-bottom: 2px; }
.panel > header button { width: 13px; height: 20px; }
.panel-body { flex: 1; min-height: 0; display: flex; }
.browser { width: 363px; border-bottom: 2px solid #f4f4f4; }
.browser .panel-body { border-top: 1px solid #444; border-left: 1px solid #555; background: #fdfdfd; }
.tree { flex: 1; display: flex; flex-direction: column; font-size: 15px; color: #1c1c1c; min-width: 0; }
.tree li { flex: 1 1 0; min-height: 0; display: flex; align-items: center; white-space: nowrap; line-height: 20px; background-repeat: no-repeat; position: relative; }
.tree .leaf { padding-left: 106px; background-image: repeating-linear-gradient(#bbb 0 3px, transparent 3px 5px), repeating-linear-gradient(#999 0 3px, transparent 3px 5px), repeating-linear-gradient(#bbb 0 3px, transparent 3px 5px), repeating-linear-gradient(90deg, #aaa 0 5px, transparent 5px 7px); background-size: 1px 100%, 1px 100%, 1px 100%, 12px 1px; background-position: 8px 0, 28px 0, 87px 0, 91px 50%; }
.tree .sub { padding-left: 24px; background-image: repeating-linear-gradient(#bbb 0 3px, transparent 3px 5px), repeating-linear-gradient(#999 0 3px, transparent 3px 5px), linear-gradient(#aaa, #aaa); background-size: 1px 100%, 1px 100%, 8px 1px; background-position: 8px 0, 28px 0, 35px 50%; }
.tree .top { padding-left: 4px; background-image: repeating-linear-gradient(#bbb 0 3px, transparent 3px 5px); background-size: 1px 100%; background-position: 8px 0; }
.tree .sub .exp { margin-right: 13px; }
.tree .top .exp { margin-right: 7px; }
.tree .top svg { margin-right: 6px; }
.tree .cut { flex-grow: .35; padding-left: 67px; align-items: flex-start; overflow: hidden; }
.exp { width: 9px; height: 9px; border: 1px solid #777; background: linear-gradient(#333, #333) center / 5px 1px no-repeat, #fff; }
.exp.plus { background: linear-gradient(#333, #333) center / 5px 1px no-repeat, linear-gradient(#333, #333) center / 1px 5px no-repeat, #fff; }
.cursor { position: absolute; left: 279px; top: 0; }

/* scroll bars */
.vscroll { width: 18px; flex: none; display: flex; flex-direction: column; background: #ececec; color: #333; }
.vscroll button { height: 20px; flex: none; width: 100%; }
.down svg { transform: rotate(180deg); }
.left svg { transform: rotate(-90deg); }
.right svg { transform: rotate(90deg); }
.dark .thumb { flex: 0 0 30%; background: #5e5e5e; margin: auto 0 24px; }
.long .thumb { flex: 0 0 79%; background: #c6c6c6; }
.long .down { margin-top: auto; }

/* drawing windows */
.mdi { flex: 1; display: grid; grid-template-columns: 1fr 1fr; padding: 1px 0 2px; min-width: 0; }
.view { display: flex; flex-direction: column; min-width: 0; border: 2px solid #4e5358; background: linear-gradient(#d8e4f0, #c0d0e2 36px, #d3e1ee 80px, #d5e3f0); padding: 0 9px 7px 8px; }
.view > header { height: 35px; flex: none; display: flex; align-items: center; gap: 3px; padding: 4px 1px 0 1px; color: #5d6a7c; }
.view > header h2 { flex: 1; font-size: 15px; padding-left: 3px; white-space: nowrap; }
.view > header button { width: 41px; height: 23px; background: #cfdbe9; border: 1px solid #8794a8; box-shadow: inset 0 0 0 1px #e6eef6; }
.client { flex: 1; min-height: 0; display: grid; grid-template: 1fr 21px / 1fr 20px; border-top: 2px solid #3c4046; border-left: 1px solid #3c4046; background: #efefef; }
.canvas { position: relative; background: #fdfdfd; overflow: hidden; }
.scene.max { width: 496px; margin: 124px 0 0 17px; }
.scene.min { width: 431px; margin: 161px 0 0 130px; }
.cube { position: absolute; right: 19px; top: 35px; }
.navbar { position: absolute; right: 2px; top: 132px; }
.client .vscroll { width: 20px; justify-content: space-between; }
.client .thumb { background: #c9c9c9; height: 20px; }
.viewbar { display: flex; align-items: center; color: #111; min-width: 0; }
.scale { width: 90px; height: 20px; justify-content: flex-start; padding-left: 27px; font-size: 13px; }
.viewtools { width: 347px; display: grid; grid-template-columns: repeat(14, 1fr); flex: none; }
.viewtools button { height: 21px; }
.viewtools svg { width: 18px; height: 16px; }
.viewtools button:last-child svg { height: 20px; }
.hscroll { flex: 1; display: flex; justify-content: space-between; align-items: stretch; color: #333; }
.hscroll button { width: 24px; }
.client .hscroll .thumb { width: 21px; height: 21px; }
.grip { place-self: end; margin: 0 2px 0 0; }

/* properties */
.props { width: 289px; border-left: 1px solid #555; }
.type { height: 84px; border-top: 1px solid #444; background: linear-gradient(#fcfcfc, #ececec); padding: 4px 4px 3px; justify-content: flex-start; gap: 5px; flex: none; color: #333; }
.type .thumbbox { width: 82px; height: 76px; border: 1px solid #c8c8c8; display: flex; align-items: center; justify-content: center; background: #f7f7f7; }
.type > svg { margin-left: auto; color: #111; }
.instance { display: flex; height: 28px; flex: none; align-items: center; }
.combo { position: relative; display: block; width: 191px; height: 26px; background: #dedede; border: 1px solid #ccc; color: #333; }
.combo select { appearance: none; width: 100%; height: 100%; padding: 0 28px 0 3px; text-overflow: clip; opacity: 1; }
.combo svg { position: absolute; right: 5px; top: 7px; transform: rotate(180deg); }
.edittype { flex: 1; gap: 5px; padding-right: 4px; }
.sheet { flex: 1; min-width: 0; }
table { width: 100%; height: 100%; border-collapse: collapse; table-layout: fixed; background: #fdfdfd; }
tr { height: 22px; }
.sec.last { height: 18px; }
td, th { padding: 0; font-weight: 400; text-align: left; line-height: 18px; white-space: nowrap; overflow: hidden; }
td { border-bottom: 1px dashed #999; color: #111; }
td:first-child { padding-left: 10px; border-right: 1px dashed #999; }
td + td { padding-left: 2px; }
th { background: #d5d5d5; padding-left: 2px; position: relative; color: #222; }
th svg { width: 10px; height: 12px; position: absolute; right: 3px; top: 3px; }
.ro td { color: #777; }
td.focus { border: 1px solid #111; padding-left: 6px; }
td input[type="text"] { width: 100%; height: 18px; display: block; }
td.b { padding-left: 3px; }
td button { width: 100%; height: 20px; background: #dfdfdf; border: 1px solid #999; border-top-color: #ccc; border-left-color: #ccc; }
button:disabled { background: #c5c5c5; color: #888; }
input[type="checkbox"] { appearance: none; display: block; width: 13px; height: 13px; border: 1px solid #333; background: #fff; position: relative; margin-left: 1px; }
input[type="checkbox"]:checked::after { content: ""; position: absolute; left: 2px; top: 2px; width: 7px; height: 4px; border-left: 1px solid #333; border-bottom: 1px solid #333; transform: rotate(-45deg); }
input[type="checkbox"]:disabled { opacity: .4; }
.props .vscroll { width: 21px; margin-left: 2px; background: #f0f0f0; }
.props footer { height: 29px; display: flex; justify-content: space-between; align-items: center; padding: 0 4px 0 2px; flex: none; }
.props footer a { color: #1864c8; }
.props footer button { width: 85px; height: 23px; }

/* status bar */
.status { height: 22px; flex: none; display: grid; grid-template-columns: 924px 1fr auto; align-items: center; background: linear-gradient(#f0f0f0, #c4c4c4); border-top: 1px solid #999; color: #111; }
.ready { padding-left: 1px; font-size: 15px; }
.sets, .selectors { display: flex; align-items: center; }
.sets button { height: 20px; padding: 0 4px; }
.sets .requests { margin-right: 14px; }
.sets .combo { height: 20px; background: #fafafa; color: #999; }
.sets select { color: #777; font-size: 18px; line-height: 18px; display: block; }
.sets .wide { width: 205px; margin-right: 5px; }
.sets .model { width: 156px; }
.selectors { padding-right: 74px; }
.selectors button { width: 26px; height: 20px; }
.selectors button:last-child { width: auto; padding-left: 1px; }
```
